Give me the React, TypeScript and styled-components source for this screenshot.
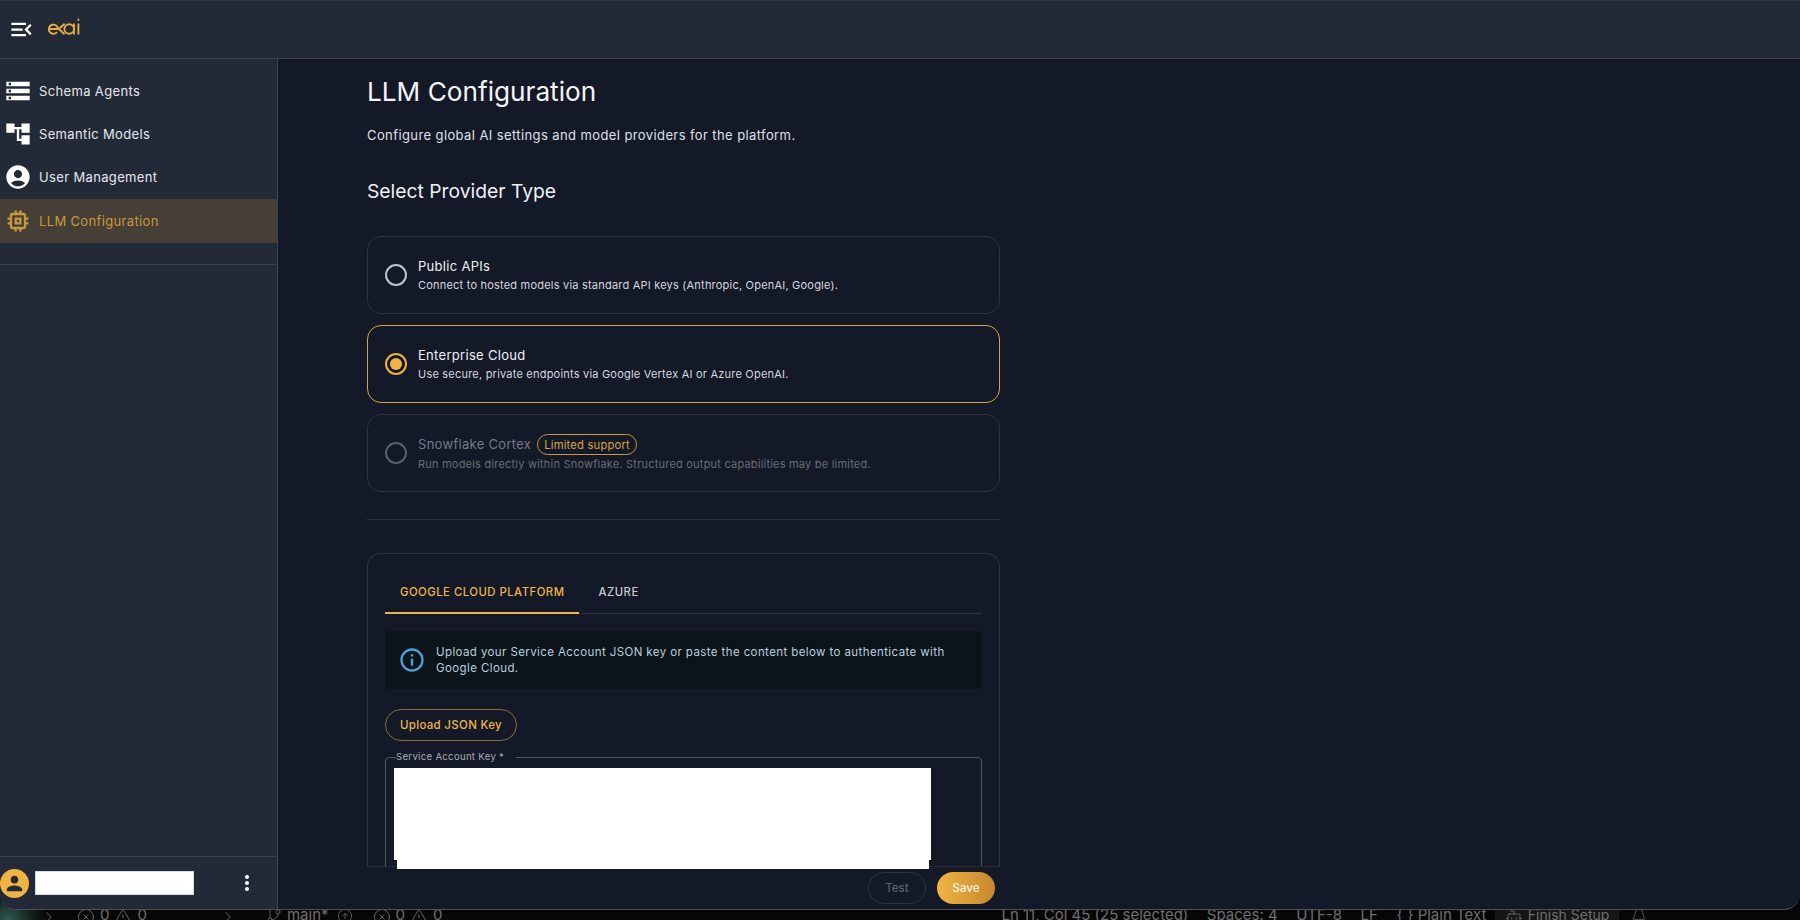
import styled, { createGlobalStyle } from 'styled-components';
import {
  MdAccountCircle,
  MdAccountTree,
  MdInfoOutline,
  MdMemory,
  MdMenuOpen,
  MdMoreVert,
  MdPerson,
  MdStorage,
} from 'react-icons/md';
import { Bell, Bot, ChevronRight, CircleArrowUp, CircleX, GitBranch, TriangleAlert } from 'lucide-react';
import type { ReactNode } from 'react';

const gold = '#f0b440';

const GlobalStyle = createGlobalStyle`
  html, body {
    margin: 0;
    height: 100%;
    background: #060606;
  }
  #root {
    height: 100%;
  }
  * {
    box-sizing: border-box;
  }
`;

const Page = styled.div`
  width: 1800px;
  height: 920px;
  overflow: hidden;
  display: flex;
  flex-direction: column;
  font-family: Inter, 'Liberation Sans', sans-serif;
  background: radial-gradient(circle at 8px 920px, #2f5d52 0, #16241f 22px, #060606 40px);
`;

const Window = styled.div`
  height: 910px;
  flex: none;
  display: flex;
  flex-direction: column;
  overflow: hidden;
  border-bottom: 1px solid #4a4f5c;
  border-radius: 0 0 16px 16px;
  background: #131927;
`;

const TopBar = styled.header`
  height: 59px;
  flex: none;
  display: flex;
  align-items: center;
  padding-left: 7.5px;
  gap: 13.5px;
  background: #222a38;
  border-top: 1px solid #2c3442;
  border-bottom: 1px solid #3d4452;
  color: #fff;
  font-size: 27px;
`;

const Logo = styled.svg`
  width: 32px;
  height: 17px;
  margin-top: -6px;
`;

const Body = styled.div`
  flex: 1;
  min-height: 0;
  display: flex;
`;

const Sidebar = styled.aside`
  width: 278px;
  flex: none;
  display: flex;
  flex-direction: column;
  background: #222a38;
  border-right: 1px solid #3a4150;
`;

const Nav = styled.nav`
  padding: 10px 0 21px;
  border-bottom: 1px solid #3a4150;
`;

const NavItem = styled.div<{ $active?: boolean }>`
  height: 43.4px;
  display: flex;
  align-items: center;
  gap: 7.5px;
  padding-left: 3.5px;
  font-size: 13px;
  letter-spacing: 0.35px;
  color: ${({ $active }) => ($active ? '#c49a3c' : '#e6e8ec')};
  background: ${({ $active }) => ($active ? '#453f36' : 'transparent')};
  svg {
    font-size: 28px;
    flex: none;
    color: ${({ $active }) => ($active ? '#c49a3c' : '#fff')};
  }
`;

const SideSpacer = styled.div`
  flex: 1;
`;

const UserRow = styled.div`
  height: 53px;
  flex: none;
  display: flex;
  align-items: center;
  border-top: 1px solid #3a4150;
`;

const Avatar = styled.div`
  width: 29px;
  height: 29px;
  border-radius: 50%;
  background: ${gold};
  color: #222a38;
  display: flex;
  align-items: center;
  justify-content: center;
  font-size: 23px;
`;

const RedactedName = styled.div`
  width: 159px;
  height: 24px;
  margin-left: 6px;
  background: #fff;
  border: 1px solid #d8dae0;
`;

const MoreButton = styled.div`
  color: #fff;
  font-size: 24px;
  display: flex;
  margin-left: 41px;
`;

const Main = styled.main`
  flex: 1;
  min-width: 0;
  overflow: hidden;
  padding-left: 89px;
`;

const Content = styled.div`
  width: 633px;
  height: 100%;
  position: relative;
  overflow: hidden;
`;

const Title = styled.h1`
  margin: 16px 0 0;
  font-size: 26.2px;
  line-height: 34px;
  font-weight: 400;
  color: #f4f5f7;
`;

const Subtitle = styled.p`
  margin: 16px 0 0;
  font-size: 13px;
  line-height: 20px;
  letter-spacing: 0.4px;
  color: #dfe1e6;
`;

const SectionTitle = styled.h2`
  margin: 32px 0 0;
  font-size: 19.3px;
  line-height: 28px;
  font-weight: 400;
  color: #f0f1f4;
`;

const Options = styled.div`
  margin-top: 31px;
  display: flex;
  flex-direction: column;
  gap: 11px;
  padding-bottom: 27px;
  border-bottom: 1px solid #2c3240;
`;

const OptionCard = styled.div<{ $selected?: boolean }>`
  height: 78px;
  display: flex;
  align-items: center;
  gap: 11px;
  padding-left: 17px;
  border-radius: 14px;
  border: 1px solid ${({ $selected }) => ($selected ? '#d9a53a' : '#2c3240')};
`;

const Radio = styled.span<{ $state: 'off' | 'on' | 'disabled' }>`
  width: 22px;
  height: 22px;
  flex: none;
  border-radius: 50%;
  display: flex;
  align-items: center;
  justify-content: center;
  border: 2px solid
    ${({ $state }) =>
      $state === 'on' ? gold : $state === 'disabled' ? '#5a5f6b' : '#c3c5ca'};
  &::after {
    content: '';
    width: 12px;
    height: 12px;
    border-radius: 50%;
    background: ${({ $state }) => ($state === 'on' ? gold : 'transparent')};
  }
`;

const OptionText = styled.div`
  min-width: 0;
`;

const OptionTitleRow = styled.div`
  display: flex;
  align-items: center;
  gap: 6px;
`;

const OptionTitle = styled.div<{ $disabled?: boolean }>`
  font-size: 13px;
  line-height: 19px;
  letter-spacing: 0.3px;
  color: ${({ $disabled }) => ($disabled ? '#757983' : '#f0f1f4')};
`;

const OptionHint = styled.div<{ $disabled?: boolean }>`
  margin-top: 1px;
  font-size: 11px;
  line-height: 16px;
  letter-spacing: 0.21px;
  color: ${({ $disabled }) => ($disabled ? '#686c76' : '#d6d8dd')};
`;

const Badge = styled.span`
  height: 21px;
  padding: 0 6px;
  display: inline-flex;
  align-items: center;
  border-radius: 11px;
  border: 1px solid #c79a3e;
  font-size: 11.2px;
  letter-spacing: 0.2px;
  color: #d9a53f;
`;

const Panel = styled.section`
  margin-top: 33px;
  padding: 17px 17px 0;
  border: 1px solid #2c3240;
  border-bottom: 0;
  border-radius: 14px 14px 0 0;
`;

const Tabs = styled.div`
  display: flex;
  gap: 4px;
  height: 43px;
  border-bottom: 1px solid #2c3240;
`;

const Tab = styled.div<{ $active?: boolean }>`
  height: 43px;
  padding: 0 15px;
  display: flex;
  align-items: center;
  font-size: 11.3px;
  font-weight: 500;
  letter-spacing: 0.5px;
  color: ${({ $active }) => ($active ? gold : '#c9cbd0')};
  border-bottom: 2px solid ${({ $active }) => ($active ? gold : 'transparent')};
`;

const InfoBox = styled.div`
  margin-top: 17px;
  height: 58px;
  display: flex;
  align-items: center;
  gap: 10px;
  padding: 0 16px 0 13px;
  border-radius: 4px;
  background: #0b1419;
  font-size: 11.5px;
  line-height: 16px;
  letter-spacing: 0.4px;
  color: #b7d0de;
  svg {
    font-size: 28px;
    flex: none;
    color: #4ba3dc;
  }
`;

const UploadButton = styled.div`
  margin-top: 20px;
  width: 132px;
  height: 32px;
  display: flex;
  align-items: center;
  justify-content: center;
  border-radius: 16px;
  border: 1px solid #8a6e35;
  font-size: 11.5px;
  font-weight: 500;
  letter-spacing: 0.3px;
  color: ${gold};
`;

const KeyField = styled.fieldset`
  margin: 10px 0 0;
  padding: 0 8px;
  min-width: 0;
  height: 160px;
  border: 1px solid #525764;
  border-radius: 4px;
  legend {
    margin-left: 2px;
    padding: 0 12px 0 0;
    font-size: 9.6px;
    line-height: 12px;
    letter-spacing: 0.3px;
    color: #a9acb4;
  }
`;

const RedactedKey = styled.div`
  width: 537px;
  height: 92px;
  margin-top: 5px;
  background: #fff;
  position: relative;
  z-index: 2;
  &::after {
    content: '';
    position: absolute;
    top: 100%;
    left: 3px;
    right: 2px;
    height: 9px;
    background: #fff;
  }
`;

const Footer = styled.div`
  position: absolute;
  left: 0;
  right: 0;
  bottom: 0;
  height: 43px;
  display: flex;
  justify-content: flex-end;
  align-items: center;
  gap: 11px;
  padding-right: 5px;
  background: #131927;
  border-top: 1px solid #262c39;
`;

const TestButton = styled.div`
  width: 58px;
  height: 32px;
  display: flex;
  align-items: center;
  justify-content: center;
  border-radius: 16px;
  border: 1px solid #2e3441;
  font-size: 11.5px;
  font-weight: 500;
  color: #5c606b;
`;

const SaveButton = styled.div`
  width: 58px;
  height: 32px;
  display: flex;
  align-items: center;
  justify-content: center;
  border-radius: 16px;
  background: linear-gradient(90deg, #f0b440, #c8872f);
  font-size: 11.5px;
  font-weight: 500;
  color: #fdf6e8;
`;

const StatusBar = styled.footer`
  flex: 1;
  min-height: 0;
  display: flex;
  overflow: hidden;
  font-size: 15px;
  line-height: 10px;
  color: #6e6e6e;
  svg {
    flex: none;
  }
`;

const StatusGroup = styled.div<{ $gap: number; $lead: number }>`
  display: flex;
  align-items: flex-start;
  gap: ${({ $gap }) => $gap}px;
  margin-left: ${({ $lead }) => $lead}px;
  height: 10px;
  white-space: nowrap;
`;

const StatusIcon = styled.span`
  display: inline-flex;
  margin-top: -2px;
`;

const BranchName = styled.span`
  margin: 0 4px 0 1px;
`;

const FinishSetup = styled.span`
  display: flex;
  align-items: flex-start;
  gap: 5px;
  padding: 0 10px;
  margin: 0 -7px 0 -10px;
  height: 10px;
  font-size: 14px;
  background: #161616;
`;

interface OptionProps {
  state: 'off' | 'on' | 'disabled';
  title: string;
  hint: string;
  badge?: string;
}

function Option({ state, title, hint, badge }: OptionProps) {
  const disabled = state === 'disabled';
  return (
    <OptionCard $selected={state === 'on'}>
      <Radio $state={state} />
      <OptionText>
        <OptionTitleRow>
          <OptionTitle $disabled={disabled}>{title}</OptionTitle>
          {badge && <Badge>{badge}</Badge>}
        </OptionTitleRow>
        <OptionHint $disabled={disabled}>{hint}</OptionHint>
      </OptionText>
    </OptionCard>
  );
}

function Counts() {
  return (
    <>
      <StatusIcon>
        <CircleX size={18} strokeWidth={1.2} />
      </StatusIcon>
      <span>0</span>
      <StatusIcon>
        <TriangleAlert size={18} strokeWidth={1.2} />
      </StatusIcon>
      <span>0</span>
    </>
  );
}

const navItems: { icon: ReactNode; label: string; active?: boolean }[] = [
  { icon: <MdStorage />, label: 'Schema Agents' },
  { icon: <MdAccountTree />, label: 'Semantic Models' },
  { icon: <MdAccountCircle />, label: 'User Management' },
  { icon: <MdMemory />, label: 'LLM Configuration', active: true },
];

export default function App() {
  return (
    <Page>
      <GlobalStyle />
      <Window>
        <TopBar>
          <MdMenuOpen />
          <Logo viewBox="0 0 32 17" fill="none" stroke="#e8ac3c" strokeWidth="1.9" strokeLinecap="round">
            <path d="M1 11h9a4.6 4.6 0 1 0-1.5 3.6" />
            <path d="M16 6.2l-5.2 4.8 5.2 4.8" />
            <path d="M26 11a4.8 4.8 0 1 1-9.6 0 4.8 4.8 0 0 1 9.6 0zM26 6.2v9.6" />
            <path d="M30.4 6.2v9.6M30.4 1.4v.6" />
          </Logo>
        </TopBar>
        <Body>
          <Sidebar>
            <Nav>
              {navItems.map((item) => (
                <NavItem key={item.label} $active={item.active}>
                  {item.icon}
                  {item.label}
                </NavItem>
              ))}
            </Nav>
            <SideSpacer />
            <UserRow>
              <Avatar>
                <MdPerson />
              </Avatar>
              <RedactedName />
              <MoreButton>
                <MdMoreVert />
              </MoreButton>
            </UserRow>
          </Sidebar>
          <Main>
            <Content>
              <Title>LLM Configuration</Title>
              <Subtitle>Configure global AI settings and model providers for the platform.</Subtitle>
              <SectionTitle>Select Provider Type</SectionTitle>
              <Options>
                <Option
                  state="off"
                  title="Public APIs"
                  hint="Connect to hosted models via standard API keys (Anthropic, OpenAI, Google)."
                />
                <Option
                  state="on"
                  title="Enterprise Cloud"
                  hint="Use secure, private endpoints via Google Vertex AI or Azure OpenAI."
                />
                <Option
                  state="disabled"
                  title="Snowflake Cortex"
                  badge="Limited support"
                  hint="Run models directly within Snowflake. Structured output capabilities may be limited."
                />
              </Options>
              <Panel>
                <Tabs>
                  <Tab $active>GOOGLE CLOUD PLATFORM</Tab>
                  <Tab>AZURE</Tab>
                </Tabs>
                <InfoBox>
                  <MdInfoOutline />
                  Upload your Service Account JSON key or paste the content below to authenticate with Google Cloud.
                </InfoBox>
                <UploadButton>Upload JSON Key</UploadButton>
                <KeyField>
                  <legend>Service Account Key *</legend>
                  <RedactedKey />
                </KeyField>
              </Panel>
              <Footer>
                <TestButton>Test</TestButton>
                <SaveButton>Save</SaveButton>
              </Footer>
            </Content>
          </Main>
        </Body>
      </Window>
      <StatusBar>
        <StatusGroup $gap={6} $lead={40}>
          <StatusIcon>
            <ChevronRight size={18} strokeWidth={1.2} />
          </StatusIcon>
        </StatusGroup>
        <StatusGroup $gap={5} $lead={19}>
          <Counts />
        </StatusGroup>
        <StatusGroup $gap={4} $lead={72}>
          <StatusIcon>
            <ChevronRight size={18} strokeWidth={1.2} />
          </StatusIcon>
        </StatusGroup>
        <StatusGroup $gap={4} $lead={29}>
          <StatusIcon>
            <GitBranch size={16} strokeWidth={1.2} />
          </StatusIcon>
          <BranchName>main*</BranchName>
          <StatusIcon>
            <CircleArrowUp size={16} strokeWidth={1.2} />
          </StatusIcon>
        </StatusGroup>
        <StatusGroup $gap={5} $lead={20}>
          <Counts />
        </StatusGroup>
        <StatusGroup $gap={18.5} $lead={559}>
          <span>Ln 11, Col 45 (25 selected)</span>
          <span>Spaces: 4</span>
          <span>UTF-8</span>
          <span>LF</span>
          <span>{'{ }'} Plain Text</span>
          <FinishSetup>
            <StatusIcon>
              <Bot size={18} strokeWidth={1.2} />
            </StatusIcon>
            Finish Setup
          </FinishSetup>
          <StatusIcon>
            <Bell size={16} strokeWidth={1.2} />
          </StatusIcon>
        </StatusGroup>
      </StatusBar>
    </Page>
  );
}
